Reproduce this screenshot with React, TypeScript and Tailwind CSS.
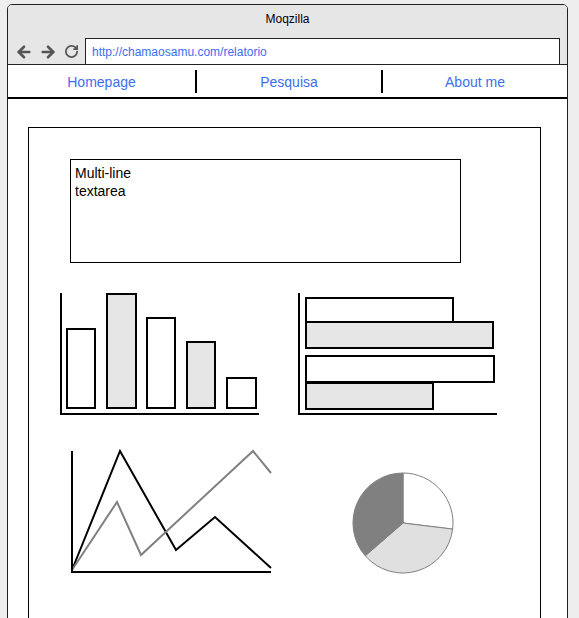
import React from 'react';
import { ArrowLeft, ArrowRight, RotateCw } from 'lucide-react';

const BarChart = () => (
    <svg width={206} height={130} viewBox="58 288 206 130" className="shrink-0">
        <rect x={67} y={329} width={28} height={79} fill="#fff" stroke="#000" strokeWidth={2}/>
        <rect x={107} y={294} width={29} height={114} fill="#e6e6e6" stroke="#000" strokeWidth={2}/>
        <rect x={147} y={318} width={28} height={90} fill="#fff" stroke="#000" strokeWidth={2}/>
        <rect x={187} y={342} width={28} height={66} fill="#e6e6e6" stroke="#000" strokeWidth={2}/>
        <rect x={227} y={378} width={29} height={30} fill="#fff" stroke="#000" strokeWidth={2}/>
        <line x1={61} y1={293} x2={61} y2={415} stroke="#000" strokeWidth={2}/>
        <line x1={60} y1={414} x2={259} y2={414} stroke="#000" strokeWidth={2}/>
    </svg>
);

const HBarChart = () => (
    <svg width={206} height={130} viewBox="294 288 206 130" className="shrink-0">
        <rect x={306} y={298} width={147} height={24} fill="#fff" stroke="#000" strokeWidth={2}/>
        <rect x={306} y={322} width={187} height={26} fill="#e6e6e6" stroke="#000" strokeWidth={2}/>
        <rect x={306} y={356} width={188} height={26} fill="#fff" stroke="#000" strokeWidth={2}/>
        <rect x={306} y={383} width={127} height={26} fill="#e6e6e6" stroke="#000" strokeWidth={2}/>
        <line x1={299} y1={293} x2={299} y2={415} stroke="#000" strokeWidth={2}/>
        <line x1={298} y1={414} x2={497} y2={414} stroke="#000" strokeWidth={2}/>
    </svg>
);

const LineChart = () => (
    <svg width={210} height={132} viewBox="66 446 210 132" className="shrink-0">
        <polyline points="72,570 120,451 176,550 215,517 271,568" fill="none" stroke="#000" strokeWidth={2}/>
        <polyline points="72,570 117,502 141,555 253,451 271,473" fill="none" stroke="#808080" strokeWidth={2}/>
        <line x1={72} y1={451} x2={72} y2={573} stroke="#000" strokeWidth={2}/>
        <line x1={71} y1={572} x2={271} y2={572} stroke="#000" strokeWidth={2}/>
    </svg>
);

// pie centred at 403,523 r=50
const PieChart = () => {
    const cx = 403, cy = 523, r = 50;
    const pt = (deg: number) => {
        const a = (deg * Math.PI) / 180;
        return `${(cx + r * Math.cos(a)).toFixed(2)},${(cy + r * Math.sin(a)).toFixed(2)}`;
    };
    const slice = (a0: number, a1: number) =>
        `M${cx},${cy} L${pt(a0)} A${r},${r} 0 ${a1 - a0 > 180 ? 1 : 0} 1 ${pt(a1)} Z`;
    return (
        <svg width={112} height={132} viewBox="346 446 112 132" className="shrink-0">
            <path d={slice(-90, 7)} fill="#fff" stroke="#808080" strokeWidth={1}/>
            <path d={slice(7, 139)} fill="#e0e0e0" stroke="#808080" strokeWidth={1}/>
            <path d={slice(139, 270)} fill="#808080" stroke="#808080" strokeWidth={1}/>
        </svg>
    );
};

export default function App() {
    return (
        <div className="w-[579px] h-[618px] overflow-hidden bg-[#eeeeee] pt-[4px] pl-[7px] font-['Liberation_Sans',Arial,sans-serif]">
            <div className="w-[561px] h-[700px] border border-[#222] rounded-t-[5px] bg-white overflow-hidden">
                {/* Title bar */}
                <div className="h-[60px] bg-[#e6e6e6] border-b border-[#222] flex flex-col">
                    <div className="text-[12px] text-black text-center leading-none pt-[8px]">Moqzilla</div>
                    <div className="flex items-center mt-[13px]">
                        <div className="flex items-center text-[#555] pl-[7px] w-[77px]">
                            <ArrowLeft className="w-[18px] h-[18px]" strokeWidth={3.5}/>
                            <ArrowRight className="w-[18px] h-[18px] ml-[6px]" strokeWidth={3.5}/>
                            <RotateCw className="w-[15px] h-[15px] ml-[7px]" strokeWidth={2.8}/>
                        </div>
                        <div className="w-[475px] h-[27px] border border-[#222] bg-white flex items-center px-[6px] text-[12px] text-[#3d6ef0]">
                            http://chamaosamu.com/relatorio
                        </div>
                    </div>
                </div>

                {/* Nav */}
                <div className="h-[34px] flex items-center border-b-2 border-black text-[14px] text-[#3d6ef0]">
                    <div className="w-[187px] text-center pt-[2px]">Homepage</div>
                    <div className="w-[2px] h-[23px] bg-black mt-[1px]"/>
                    <div className="w-[184px] text-center pt-[2px]">Pesquisa</div>
                    <div className="w-[2px] h-[23px] bg-black mt-[1px]"/>
                    <div className="flex-1 text-center pt-[2px]">About me</div>
                </div>

                {/* Content */}
                <div className="pt-[28px] pl-[20px]">
                    <div className="w-[513px] h-[600px] border border-black">
                        <div className="ml-[41px] mt-[31px] w-[391px] h-[104px] border border-black px-[4px] pt-[4px] text-[14px] leading-[18px] text-black">
                            Multi-line<br/>textarea
                        </div>
                        <div className="flex mt-[25px] ml-[29px] gap-[30px]">
                            <BarChart/>
                            <HBarChart/>
                        </div>
                        <div className="flex mt-[28px] ml-[37px] gap-[70px]">
                            <LineChart/>
                            <PieChart/>
                        </div>
                    </div>
                </div>
            </div>
        </div>
    );
}
